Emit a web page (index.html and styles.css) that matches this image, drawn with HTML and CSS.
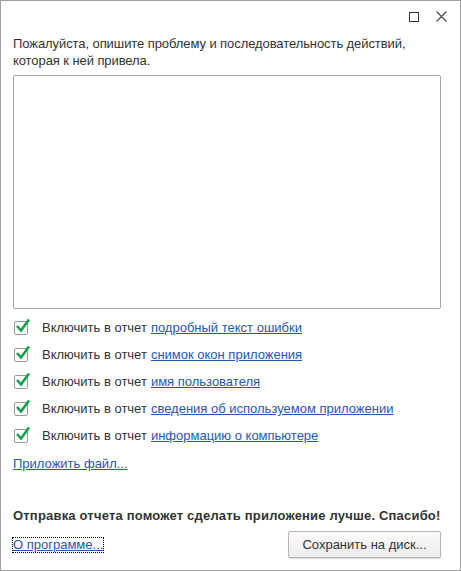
FILE: index.html
```html
<!DOCTYPE html>
<html>
<head>
<meta charset="utf-8">
<link rel="stylesheet" href="styles.css">
</head>
<body>
<div class="window">
  <div class="titlebar">
    <svg class="tb-icon" width="10" height="10" viewBox="0 0 10 10"><rect x="0.5" y="0.5" width="9" height="9" fill="none" stroke="#333" stroke-width="1"/></svg>
    <svg class="tb-icon" width="11" height="11" viewBox="0 0 11 11"><path d="M0.5 0.5 L10.5 10.5 M10.5 0.5 L0.5 10.5" stroke="#444" stroke-width="1.1"/></svg>
  </div>
  <div class="content">
    <p class="intro">Пожалуйста, опишите проблему и последовательность действий, которая к ней привела.</p>
    <textarea class="desc"></textarea>
    <ul class="checks">
      <li><span class="cb"><svg width="18" height="16" viewBox="0 0 18 16"><path d="M3 8 L7 12.5 L15 1.5" fill="none" stroke="#12a049" stroke-width="2.6"/></svg></span>Включить в отчет <a href="#">подробный текст ошибки</a></li>
      <li><span class="cb"><svg width="18" height="16" viewBox="0 0 18 16"><path d="M3 8 L7 12.5 L15 1.5" fill="none" stroke="#12a049" stroke-width="2.6"/></svg></span>Включить в отчет <a href="#">снимок окон приложения</a></li>
      <li><span class="cb"><svg width="18" height="16" viewBox="0 0 18 16"><path d="M3 8 L7 12.5 L15 1.5" fill="none" stroke="#12a049" stroke-width="2.6"/></svg></span>Включить в отчет <a href="#">имя пользователя</a></li>
      <li><span class="cb"><svg width="18" height="16" viewBox="0 0 18 16"><path d="M3 8 L7 12.5 L15 1.5" fill="none" stroke="#12a049" stroke-width="2.6"/></svg></span>Включить в отчет <a href="#">сведения об используемом приложении</a></li>
      <li><span class="cb"><svg width="18" height="16" viewBox="0 0 18 16"><path d="M3 8 L7 12.5 L15 1.5" fill="none" stroke="#12a049" stroke-width="2.6"/></svg></span>Включить в отчет <a href="#">информацию о компьютере</a></li>
    </ul>
    <a href="#" class="attach">Приложить файл...</a>
    <p class="thanks">Отправка отчета поможет сделать приложение лучше. Спасибо!</p>
    <div class="footer">
      <a href="#" class="about">О программе...</a>
      <button class="save">Сохранить на диск...</button>
    </div>
  </div>
</div>
</body>
</html>
```
FILE: styles.css
```css
html, body {
  margin: 0;
  padding: 0;
  background: #fff;
}
body {
  font-family: "Liberation Sans", Arial, sans-serif;
  font-size: 13px;
  color: #333;
}
.window {
  width: 461px;
  height: 571px;
  box-sizing: border-box;
  border: 1px solid #a0a0a0;
  display: flex;
  flex-direction: column;
}
.titlebar {
  height: 31px;
  display: flex;
  justify-content: flex-end;
  align-items: center;
  gap: 17px;
  padding-right: 13px;
}
.content {
  flex: 1;
  display: flex;
  flex-direction: column;
  padding: 0 19px 0 12px;
}
.intro {
  margin: 3px 0 0 0;
  line-height: 17px;
  width: 420px;
  letter-spacing: -0.08px;
}
.desc {
  margin: 6px 0 0 0;
  height: 234px;
  width: 428px;
  box-sizing: border-box;
  border: 1px solid #a5a5a5;
  border-radius: 2px;
  resize: none;
  outline: none;
}
.checks {
  list-style: none;
  margin: 5px 0 0 0;
  padding: 0;
}
.checks li {
  height: 27px;
  display: flex;
  align-items: center;
}
.cb {
  position: relative;
  width: 14px;
  height: 14px;
  box-sizing: border-box;
  border: 1px solid #9a9a9a;
  border-radius: 2px;
  margin: 0 14px 0 1px;
  background: #fff;
}
.cb svg {
  position: absolute;
  left: -1px;
  top: -4px;
}
a {
  color: #2457b8;
  text-decoration: underline;
}
.checks a { margin-left: 4px; }
.attach {
  margin-top: 7px;
  align-self: flex-start;
}
.thanks {
  margin: 37px 0 0 0;
  font-weight: bold;
  color: #333;
  white-space: nowrap;
  letter-spacing: 0.19px;
}
.footer {
  display: flex;
  justify-content: space-between;
  align-items: center;
  margin-top: 8px;
}
.about {
  outline: 1px dotted #000;
  outline-offset: 0;
  line-height: 14px;
}
.save {
  width: 153px;
  height: 27px;
  font-family: "Liberation Sans", Arial, sans-serif;
  font-size: 13px;
  color: #333;
  border: 1px solid #b5b5b5;
  border-radius: 2px;
  background: linear-gradient(#fbfbfb, #ececec);
  box-shadow: 0 1px 1px rgba(0,0,0,0.15);
}
```
